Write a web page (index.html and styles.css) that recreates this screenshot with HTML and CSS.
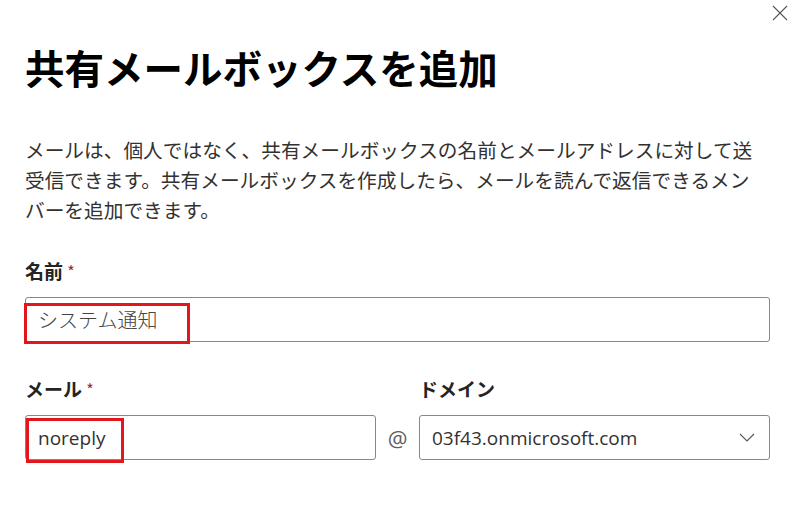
FILE: index.html
```html
<!DOCTYPE html>
<html lang="ja">
<head>
<meta charset="utf-8">
<link rel="stylesheet" href="styles.css">
</head>
<body>
<div class="panel">
  <button class="close" aria-label="閉じる">
    <svg width="16" height="16" viewBox="0 0 16 16"><path d="M1 1 L15 15 M15 1 L1 15" stroke="#555" stroke-width="1.1" fill="none"/></svg>
  </button>
  <h1 class="title">共有メールボックスを追加</h1>
  <p class="desc">メールは、個人ではなく、共有メールボックスの名前とメールアドレスに対して送受信できます。共有メールボックスを作成したら、メールを読んで返信できるメンバーを追加できます。</p>

  <div class="field">
    <label class="label">名前 <span class="req">*</span></label>
    <div class="input wide">
      <span class="value jp">システム通知</span>
      <span class="mark mark-name"></span>
    </div>
  </div>

  <div class="row">
    <div class="field col">
      <label class="label">メール <span class="req">*</span></label>
      <div class="input">
        <span class="value">noreply</span>
        <span class="mark mark-mail"></span>
      </div>
    </div>
    <div class="at">@</div>
    <div class="field col">
      <label class="label">ドメイン</label>
      <div class="input select">
        <span class="value">03f43.onmicrosoft.com</span>
        <svg class="chev" width="16" height="10" viewBox="0 0 16 10"><path d="M1 1 L8 8 L15 1" stroke="#555" stroke-width="1.1" fill="none"/></svg>
      </div>
    </div>
  </div>
</div>
</body>
</html>
```
FILE: styles.css
```css
html, body {
  margin: 0;
  padding: 0;
  background: #ffffff;
}
body {
  font-family: "Noto Sans CJK JP", "Open Sans", sans-serif;
  color: #323130;
}
.panel {
  position: relative;
  width: 800px;
  height: 520px;
  box-sizing: border-box;
  padding: 44px 30px 0 25px;
}
.close {
  position: absolute;
  top: 5px;
  right: 12px;
  border: 0;
  background: transparent;
  padding: 0;
  width: 16px;
  height: 16px;
}
.close svg { display: block; }
.title {
  margin: 0;
  font-size: 39.5px;
  line-height: 46px;
  font-weight: 700;
  color: #000;
  letter-spacing: 0;
}
.desc {
  margin: 45px 0 0 0;
  font-size: 19.7px;
  line-height: 30px;
  color: #323130;
  width: 735px;
}
.field { display: flex; flex-direction: column; }
.label {
  font-size: 19px;
  font-weight: 700;
  line-height: 26px;
  color: #252423;
}
.req { color: #a4262c; font-weight: 400; font-size: 16px; vertical-align: top; }
.desc + .field { margin-top: 33px; }
.input {
  position: relative;
  margin-top: 13px;
  height: 45px;
  box-sizing: border-box;
  border: 1px solid #8a8886;
  border-radius: 3px;
  display: flex;
  align-items: center;
  padding: 0 12px;
}
.wide { width: 745px; }
.value {
  font-family: "Segoe UI", "Open Sans", "Noto Sans CJK JP", sans-serif;
  font-size: 19px;
  color: #323130;
}
.value.jp { font-family: "Noto Sans CJK JP", sans-serif; font-weight: 300; font-size: 20px; color: #444; }
.mark {
  position: absolute;
  border: 3px solid #e2161d;
  box-sizing: border-box;
}
.mark-name { left: -2px; top: 5px; width: 166px; height: 41px; }
.mark-mail { left: 0px; top: 2px; width: 98px; height: 45px; }
.row {
  display: flex;
  align-items: flex-end;
  margin-top: 34px;
}
.col { width: 351px; }
.at {
  width: 43px;
  height: 45px;
  display: flex;
  align-items: center;
  justify-content: center;
  font-family: "Segoe UI", "Open Sans", sans-serif;
  font-size: 22px;
  color: #605e5c;
}
.select { justify-content: space-between; }
.chev { display: block; margin-right: 2px; }
```
